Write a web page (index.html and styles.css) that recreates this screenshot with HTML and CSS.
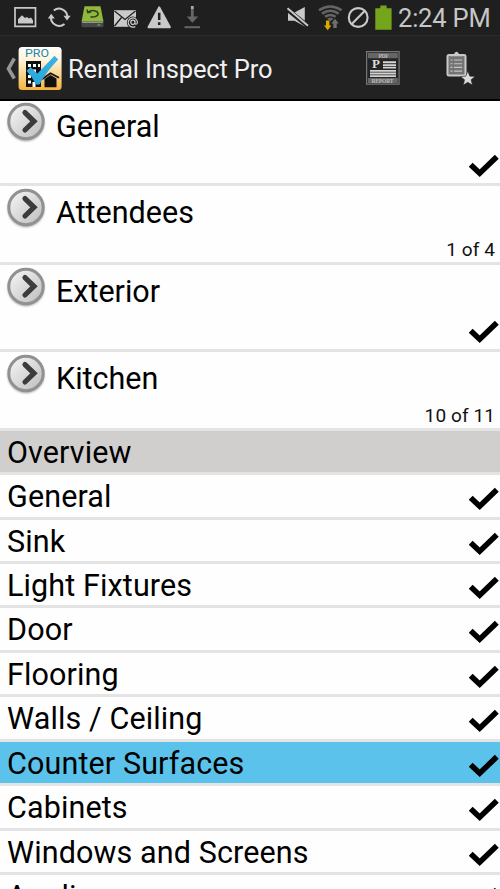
FILE: index.html
```html
<!DOCTYPE html>
<html lang="en">
<head>
<meta charset="utf-8">
<title>Rental Inspect Pro</title>
<link rel="stylesheet" href="styles.css">
</head>
<body>
<svg class="defs" width="0" height="0" aria-hidden="true">
  <defs>
    <linearGradient id="knob" x1="0" y1="0" x2="1" y2="1"><stop offset="0" stop-color="#f8f8f8"/><stop offset="1" stop-color="#bcbcbc"/></linearGradient>
    <linearGradient id="app" x1="0" y1="0" x2="0" y2="1"><stop offset="0" stop-color="#fff"/><stop offset=".3" stop-color="#fff4dc"/><stop offset="1" stop-color="#f6b33c"/></linearGradient>
    <linearGradient id="tick" x1="0" y1="0" x2="0" y2="1"><stop offset="0" stop-color="#38b4e4"/><stop offset="1" stop-color="#2aa4dc"/></linearGradient>
    <filter id="soft" x="-20%" y="-20%" width="140%" height="140%"><feGaussianBlur stdDeviation="1.1"/></filter>
  </defs>
  <symbol id="go" viewBox="0 0 42 42">
    <circle cx="21" cy="22" r="18.2" fill="#777" opacity=".65" filter="url(#soft)"/>
    <circle cx="21" cy="20.5" r="17.2" fill="url(#knob)" stroke="#929090" stroke-width="3"/>
    <path d="M20 11.600 29 20.300 20 29" fill="none" stroke="#3c3c3c" stroke-width="5.200" stroke-linecap="round" stroke-linejoin="miter"/>
  </symbol>
  <symbol id="check" viewBox="0 0 30 24">
    <path d="M1.700 10.700 10.700 19.200 27.800 2.800" fill="none" stroke="#000" stroke-width="5.600"/>
  </symbol>
</svg>

<header class="status">
  <svg class="status-icons" width="210" height="36" viewBox="0 0 210 36">
    <path d="M15 7.800h20.500v18.600H15z" fill="none" stroke="#c9c9c9" stroke-width="1.700"/>
    <path d="M18 23.500v-4.300l4-4 3 2.800 2-1 2 1.500 2-1 2 3v3z" fill="#c9c9c9"/>
    <g fill="none" stroke="#c9c9c9" stroke-width="2"><path d="M53.800 10.500a8.300 8.300 0 0 1 13.500 6.800"/><path d="M64.500 24a8.300 8.300 0 0 1-13.500-7"/></g>
    <path d="M63.500 15.800h7.200L67 20.400zM47.800 18.400h7L51.200 13.800z" fill="#c9c9c9"/>
    <path d="M84.500 6.200h16l3 15.500h-22z" fill="#90b83c"/>
    <path d="M81.500 21.700h22v4.500q0 1-1 1h-20q-1 0-1-1z" fill="#44464a"/>
    <path d="M82 22.300h21" stroke="#a8aaa8"/><path d="M97.500 25h3" stroke="#90b83c"/>
    <path d="M90.500 16.800c4 1 8-1 7.500-3.500s-6.500-4-10-1M87 9.500l.8 3.200 3.400-.6" fill="none" stroke="#343d20" stroke-width="1.500"/>
    <path d="M114 10.200h22v16.600h-22z" fill="#c9c9c9"/>
    <path d="M114.500 11 125 19.500 135.500 11M114.500 26l7-8.500M135 24l-5-6" fill="none" stroke="#202020" stroke-width="1.300"/>
    <circle cx="132.800" cy="22.500" r="5.900" fill="#202020"/>
    <path d="M135.300 26.400a4.600 4.600 0 1 1 2.100-4.100c0 2.500-2.600 2.600-2.500.4l.2-2.300m-.1 1.700a2.100 2.100 0 1 1-4.200.4 2.100 2.100 0 0 1 4.200-.4" fill="none" stroke="#d0d0d0" stroke-width="1.200"/>
    <path d="M159.200 7.200 170 27.300h-21.600z" fill="#c9c9c9" stroke="#c9c9c9" stroke-width="1.800" stroke-linejoin="round"/>
    <path d="M159.200 12.800v7.200M159.200 22.200v2.800" stroke="#202020" stroke-width="2.500"/>
    <path d="M192.300 6v3" stroke="#aaa" stroke-width="2.800"/><path d="M192.300 9v8" stroke="#666" stroke-width="2.800"/>
    <path d="M186.700 16.500h11.500l-5.800 6.200z" fill="#666"/><path d="M184.500 27.200H200" stroke="#666" stroke-width="2"/>
  </svg>
  <svg class="status-icons" width="115" height="36" viewBox="280 0 115 36">
    <path d="M288 12.500h6.500L304.800 7v19.500l-10.300-5.800H288z" fill="#c9c9c9"/>
    <path d="M286.500 8.800 307.800 26" stroke="#202020" stroke-width="4.600"/><path d="M287.500 8.300 308 25.800" stroke="#c9c9c9" stroke-width="2"/>
    <g fill="none" stroke="#656565" stroke-width="2.500"><path d="M319 10.300q11.300-7.500 22.600 0"/><path d="M322 13.600q8.300-5.600 16.600 0"/><path d="M325 16.800q5.300-3.600 10.600 0"/></g>
    <path d="m327 18.500 3.300-1 3.300 1-3.300 3z" fill="#656565"/>
    <path d="M326 20.500h3.400v5h2l-3.700 4.800-3.700-4.800h2z" fill="#dba900"/><path d="M333.300 28v-4.500h-2l3.700-4.700 3.700 4.700h-2V28z" fill="#707070"/>
    <circle cx="358.200" cy="17.500" r="9.400" fill="none" stroke="#c9c9c9" stroke-width="2.100"/><path d="m351.800 24 12.800-13" stroke="#c9c9c9" stroke-width="2.100"/>
    <path d="M375.300 8.300h5V5.500h6.300v2.800h5V29.800h-16.300z" fill="#74a51a"/>
  </svg>
  <span class="clock">2:24 PM</span>
</header>

<nav class="bar">
  <svg class="back" width="12" height="26" viewBox="0 0 12 26"><path d="M10.300 3.500 4.500 13.700 10.300 23.500" fill="none" stroke="#969696" stroke-width="3.600"/></svg>
  <svg class="logo" width="44" height="46" viewBox="0 0 44 46">
    <rect x=".6" y="1" width="43" height="43" rx="3.500" fill="url(#app)"/>
    <text class="logo-text" x="7" y="11.200" textLength="24" lengthAdjust="spacingAndGlyphs">PRO</text>
    <path d="M8 15h15v26H8z" fill="#111"/>
    <path d="M10 18h3v3h-3zm5 0h3v3h-3zm5 0h2v3h-2zM10 23.500h3v3h-3zm5 0h3v3h-3zM10 29h3v3h-3zm0 5.500h3v3h-3zm9 0h3v3h-3zM14.500 36h3v5h-3z" fill="#fff"/>
    <path d="m24 33.200 8.500-6 8.500 4.500" fill="none" stroke="#111" stroke-width="1.700"/><path d="m26.500 33 6-4 6 3.500v8.800h-12z" fill="#111"/>
    <path d="m8.500 24.800 4-3.500 7 6.200L36.500 9.800l3.700 3.600Q28 26 21.500 38.500h-3.500q-4-8-9.500-13.700z" fill="url(#tick)"/>
  </svg>
  <h1 class="title">Rental Inspect Pro</h1>
  <svg class="pdf" width="34" height="34" viewBox="0 0 34 34">
    <path d="M.6.600h32.500v32.500H.600z" fill="#242424" stroke="#777" stroke-width="1.200"/>
    <path d="M2 2h29.800v5.300H2zM2 27h29.800v5.200H2z" fill="#666"/>
    <text class="pdf-small" x="12.500" y="6.500" textLength="10">PDF</text>
    <text class="pdf-p" x="6" y="17.300">P</text>
    <path d="M17 10.300h13v2H17zm0 2.900h13v1.700H17zm0 2.600h13v1.700H17zM4 18.900h26v1.900H4zm0 2.700h26v1.800H4zm0 2.600h26v1.700H4z" fill="#d4d4d4"/>
    <text class="pdf-small" x="5.500" y="31.500" textLength="22">REPORT</text>
  </svg>
  <svg class="clip" width="30" height="36" viewBox="0 0 30 36">
    <rect x="1.500" y="4" width="18" height="20.500" rx="1.500" fill="#747474" stroke="#c9c9c9" stroke-width="2"/>
    <path d="M4 5.300V3.500l4-.5Q10.500-1.500 13 3l4 .5v1.800z" fill="#c9c9c9"/>
    <path d="M4.500 9h2m1.500 0h8M4.500 12.700h2m1.500 0h8M4.500 16.400h2m1.500 0h8M4.500 20.100h2m1.500 0h8" stroke="#c4c4c4" stroke-width="1.100"/>
    <path d="m21.800 20.200 2 5 5.300.3-4.100 3.300 1.400 5.300-4.600-2.900-4.500 2.900 1.300-5.300-4.100-3.300 5.300-.3z" fill="#dcdcdc" stroke="#222" stroke-width=".5"/>
  </svg>
</nav>

<main class="list">
  <section class="group first"><svg class="go"><use href="#go"/></svg><h2 class="name">General</h2><svg class="check"><use href="#check"/></svg></section>
  <section class="group short"><svg class="go"><use href="#go"/></svg><h2 class="name">Attendees</h2><span class="count">1 of 4</span></section>
  <section class="group"><svg class="go"><use href="#go"/></svg><h2 class="name">Exterior</h2><svg class="check"><use href="#check"/></svg></section>
  <section class="group short"><svg class="go"><use href="#go"/></svg><h2 class="name">Kitchen</h2><span class="count">10 of 11</span></section>
  <div class="item overview"><span>Overview</span></div>
  <div class="item"><span>General</span><svg class="check"><use href="#check"/></svg></div>
  <div class="item"><span>Sink</span><svg class="check"><use href="#check"/></svg></div>
  <div class="item"><span>Light Fixtures</span><svg class="check"><use href="#check"/></svg></div>
  <div class="item"><span>Door</span><svg class="check"><use href="#check"/></svg></div>
  <div class="item"><span>Flooring</span><svg class="check"><use href="#check"/></svg></div>
  <div class="item"><span>Walls / Ceiling</span><svg class="check"><use href="#check"/></svg></div>
  <div class="item selected"><span>Counter Surfaces</span><svg class="check"><use href="#check"/></svg></div>
  <div class="item"><span>Cabinets</span><svg class="check"><use href="#check"/></svg></div>
  <div class="item"><span>Windows and Screens</span><svg class="check"><use href="#check"/></svg></div>
  <div class="item"><span>Appliances</span><svg class="check"><use href="#check"/></svg></div>
</main>
</body>
</html>
```

FILE: styles.css
```css
* { box-sizing: border-box; }
html, body { height: 889px; }
body {
  margin: 0;
  width: 500px;
  overflow: hidden;
  display: flex;
  flex-direction: column;
  background: #fefefe;
  color: #000;
  font-family: Roboto, "Liberation Sans", sans-serif;
}
.defs { position: absolute; }
svg { display: block; flex: none; }

.status {
  height: 35px;
  flex: none;
  display: flex;
  justify-content: space-between;
  background: #1f1f1f;
}
.status-icons:nth-child(2) { margin-left: 70px; }
.clock {
  flex: 1;
  padding-left: 3px;
  font-size: 25.500px;
  letter-spacing: -0.200px;
  line-height: 36px;
  color: #c6c6c6;
  white-space: nowrap;
}

.bar {
  height: 66px;
  flex: none;
  display: flex;
  align-items: flex-start;
  background: #222;
  border-top: 1px solid #2c2c2c;
  border-bottom: 2px solid #000;
}
.back { margin: 19px 0 0 4px; }
.logo { margin: 10px 0 0 2px; }
.logo-text { font-size: 11px; fill: #26849f; }
.title {
  margin: 0 0 0 6px;
  width: 298px;
  font-size: 25.500px;
  font-weight: 400;
  letter-spacing: -0.150px;
  line-height: 66px;
  color: #f0f0f0;
  white-space: nowrap;
}
.pdf { margin-top: 15px; }
.pdf-small { font: bold 5.500px "Liberation Serif", serif; fill: #bbb; }
.pdf-p { font: bold 13px "Liberation Serif", serif; fill: #ddd; }
.clip { margin: 15px 0 0 46px; }

.list { flex: 1; overflow: hidden; }
.group {
  height: 86.300px;
  display: flex;
  border-bottom: 3px solid #e4e4e4;
}
.group.short { height: 79.100px; }
.group.first { height: 85.200px; }
.go { width: 42px; height: 42px; margin: 1px 0 0 5px; }
.first .go { margin-top: 0; }
.name {
  margin: 0 0 0 9px;
  flex: 1;
  font-size: 30.500px;
  font-weight: 400;
  line-height: 53.400px;
}
.first .name { line-height: 52px; }
.check { width: 30px; height: 24px; margin-right: 1px; }
.group .check { align-self: flex-end; margin-bottom: 5px; }
.count {
  align-self: flex-end;
  margin: 0 5px 0 0;
  font-size: 19px;
  letter-spacing: 0.100px;
  line-height: 24px;
  color: #111;
}
.item {
  height: 44.450px;
  display: flex;
  justify-content: space-between;
  padding-left: 7px;
  border-bottom: 3px solid #e4e4e4;
  font-size: 30.500px;
  letter-spacing: 0.120px;
  line-height: 44px;
  white-space: nowrap;
}
.item .check { margin-top: 12px; }
.overview { background: #d0cfcd; }
.selected { background: #5bc3eb; }
```
